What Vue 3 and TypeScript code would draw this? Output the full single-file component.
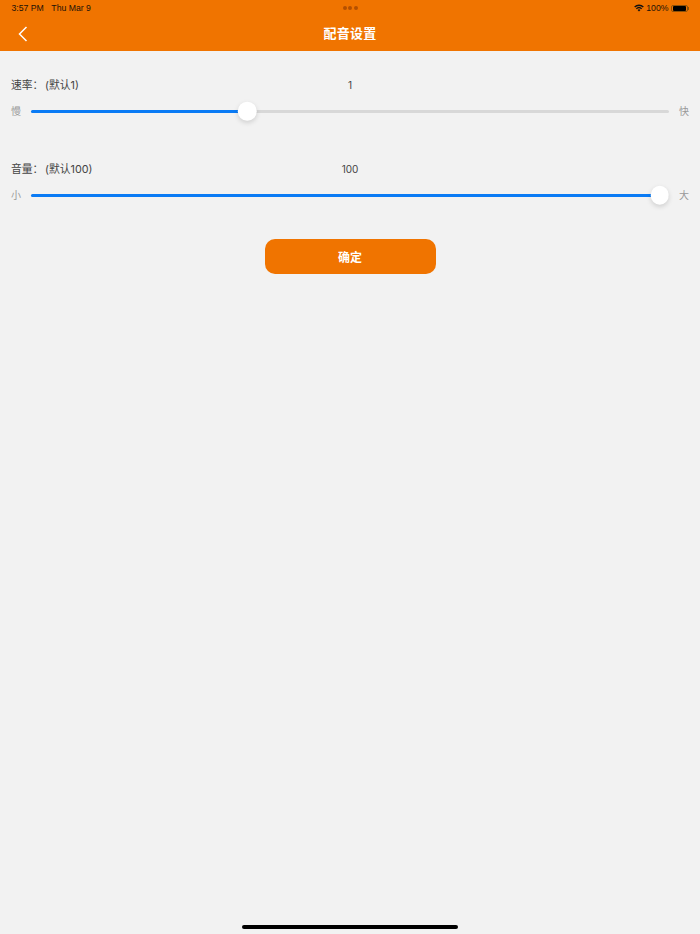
<script setup lang="ts">
interface SliderRow {
  label: string
  value: string
  low: string
  high: string
  percent: number
}

const rows: SliderRow[] = [
  { label: '速率：', value: '1', low: '慢', high: '快', percent: 33.9 },
  { label: '音量：', value: '100', low: '小', high: '大', percent: 98.6 },
]
</script>

<template>
  <div class="page">
    <header class="header">
      <div class="status">
        <div class="status-left">
          <span>3:57 PM</span>
          <span>Thu Mar 9</span>
        </div>
        <div class="dots"><i></i><i></i><i></i></div>
        <div class="status-right">
          <svg class="wifi" viewBox="0 0 16 12" width="10" height="7.5">
            <path d="M0.3 4.1A11 11 0 0 1 15.7 4.1L14.2 5.7A8.8 8.8 0 0 0 1.8 5.7Z" fill="#111" />
            <path d="M3 6.9A7.2 7.2 0 0 1 13 6.9L11.5 8.5A5 5 0 0 0 4.5 8.5Z" fill="#111" />
            <path d="M5.7 9.6A3.3 3.3 0 0 1 10.3 9.6L8 12Z" fill="#111" />
          </svg>
          <span>100%</span>
          <div class="battery"><div class="battery-fill"></div></div>
          <div class="battery-cap"></div>
        </div>
      </div>
      <div class="nav">
        <svg class="back" viewBox="0 0 10 16" width="10" height="16">
          <path d="M8.5 1L1.5 8L8.5 15" fill="none" stroke="#fff" stroke-width="1.5" />
        </svg>
        <h1 class="title">配音设置</h1>
      </div>
    </header>

    <main class="content">
      <section v-for="row in rows" :key="row.label" class="setting">
        <div class="setting-head">
          <div class="setting-label">
            <span class="setting-name">{{ row.label }}</span>
            <span>(默认{{ row.value }})</span>
          </div>
          <span class="setting-value">{{ row.value }}</span>
        </div>
        <div class="slider-row">
          <span class="end">{{ row.low }}</span>
          <div class="track">
            <div class="track-fill" :style="{ width: row.percent + '%' }"></div>
            <div class="thumb" :style="{ left: row.percent + '%' }"></div>
          </div>
          <span class="end end-high">{{ row.high }}</span>
        </div>
      </section>

      <button class="confirm" type="button">确定</button>
    </main>

    <div class="home-bar"></div>
  </div>
</template>

<style>
html,
body {
  margin: 0;
  background: #f2f2f2;
}
</style>

<style scoped>
.page {
  position: relative;
  width: 700px;
  height: 934px;
  background: #f2f2f2;
  display: flex;
  flex-direction: column;
  overflow: hidden;
  font-family: "Inter", "Liberation Sans", "Noto Sans CJK SC", sans-serif;
}

.header {
  height: 51px;
  background: #f07400;
  display: flex;
  flex-direction: column;
  flex: none;
}

.status {
  height: 16px;
  display: grid;
  grid-template-columns: 1fr auto 1fr;
  align-items: center;
  padding: 0 11px 0 11.5px;
  font-family: "Liberation Sans", sans-serif;
  font-size: 8.7px;
  color: #1a1208;
}

.status-left {
  display: flex;
  gap: 7.5px;
}

.dots {
  display: flex;
  gap: 1.5px;
}

.dots i {
  width: 4px;
  height: 4px;
  border-radius: 50%;
  background: #b45000;
}

.status-right {
  display: flex;
  justify-content: flex-end;
  align-items: center;
  gap: 2.5px;
}

.battery {
  width: 13.5px;
  height: 5px;
  padding: 0 0.5px;
  border: 1px solid #8f5208;
  border-radius: 2px;
  box-sizing: content-box;
}

.battery-fill {
  width: 100%;
  height: 100%;
  background: #000;
  border-radius: 1px;
}

.battery-cap {
  width: 1px;
  height: 3px;
  background: #8f5208;
  margin-left: -2px;
}

.nav {
  flex: 1;
  position: relative;
  display: flex;
  align-items: center;
  justify-content: center;
}

.back {
  position: absolute;
  left: 18px;
  top: 9.5px;
}

.title {
  margin: 0 0 2px;
  font-size: 13px;
  font-weight: 700;
  color: #fff;
  letter-spacing: 0.2px;
  font-family: "Noto Sans CJK SC", sans-serif;
}

.content {
  display: flex;
  flex-direction: column;
  padding: 25px 11px 0;
}

.setting + .setting {
  margin-top: 40px;
}

.setting-head {
  position: relative;
  height: 18px;
  display: flex;
  align-items: center;
  color: #444;
}

.setting-label {
  display: flex;
  margin-bottom: 2px;
  font-size: 10.8px;
  font-family: "Inter", "Noto Sans CJK SC", sans-serif;
}

.setting-name {
  width: 34px;
  font-size: 10.8px;
  white-space: nowrap;
  font-family: "Noto Sans CJK SC", sans-serif;
}

.setting-value {
  position: absolute;
  left: 50%;
  font-size: 10px;
  transform: translateX(-50%);
}

.slider-row {
  margin-top: 8px;
  height: 18px;
  display: flex;
  align-items: center;
  gap: 10.5px;
}

.end {
  width: 9.5px;
  margin-top: -1px;
  font-size: 10px;
  color: #999;
  flex: none;
  white-space: nowrap;
  font-family: "Noto Sans CJK SC", sans-serif;
}

.end-high {
  width: 10px;
}

.track {
  flex: 1;
  height: 3px;
  background: #d8d8d8;
  border-radius: 2px;
  position: relative;
}

.track-fill {
  height: 100%;
  background: #0a7bf5;
  border-radius: 2px;
}

.thumb {
  position: absolute;
  top: 50%;
  width: 18.5px;
  height: 18.5px;
  transform: translate(-50%, -50%);
  border-radius: 50%;
  background: #fff;
  box-shadow: 0 2px 5px rgba(0, 0, 0, 0.15);
}

.confirm {
  align-self: center;
  width: 171px;
  height: 34.5px;
  margin-top: 35px;
  border: none;
  border-radius: 10px;
  background: #f07400;
  color: #fff;
  font-size: 12px;
  font-weight: 700;
  font-family: "Noto Sans CJK SC", sans-serif;
  padding: 0;
}

.home-bar {
  position: absolute;
  left: 242px;
  top: 924.5px;
  width: 216px;
  height: 4px;
  border-radius: 2px;
  background: #000;
}
</style>
